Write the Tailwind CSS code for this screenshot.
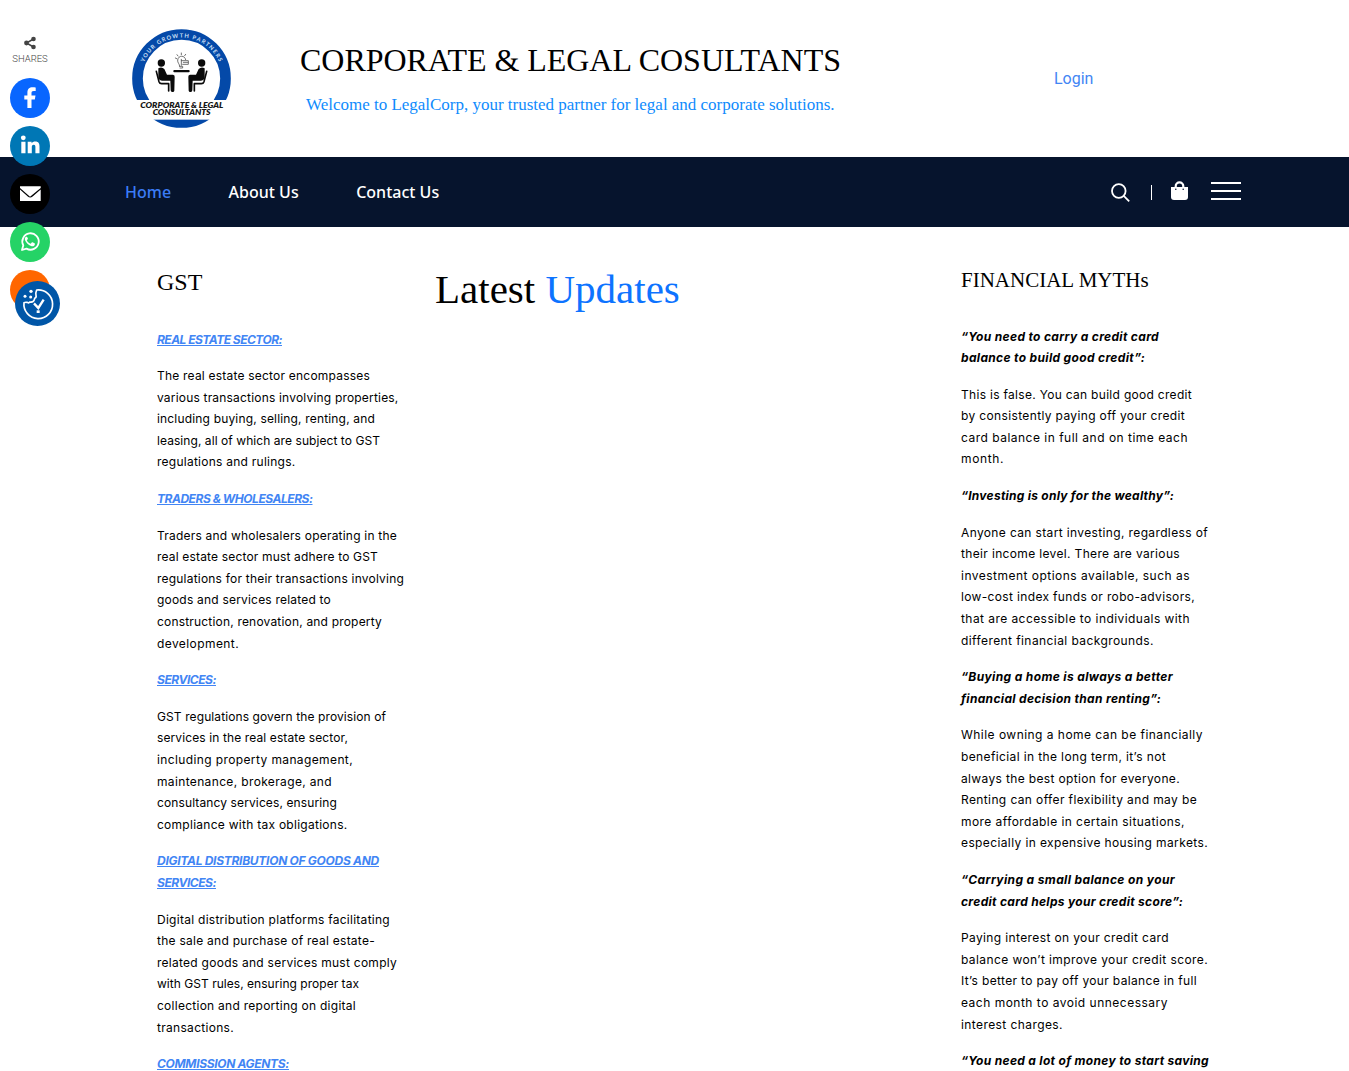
<!DOCTYPE html>
<html lang="en">
<head>
<meta charset="utf-8">
<title>Corporate &amp; Legal Consultants</title>
<script src="https://cdn.jsdelivr.net/npm/@tailwindcss/browser@4"></script>
</head>
<body class="relative h-[1071px] overflow-hidden bg-white text-black">

<!-- Header -->
<header class="flex h-[157px] pl-[132px]">
  <svg class="mt-[29px] h-[99px] w-[99px] shrink-0" viewBox="36 27 297 297">
    <circle cx="184.500" cy="175.500" r="132" fill="none" stroke="#0449a8" stroke-width="32"/>
    <rect x="30" y="240" width="310" height="59" fill="#fff"/>
    <defs><path id="arc" d="M72 127 A123 123 0 0 1 301 135"/></defs>
    <text font-family="Lato, sans-serif" font-size="17" font-weight="700" fill="#cfe0f7"><textPath href="#arc" textLength="284">YOUR GROWTH PARTNERS</textPath></text>
    <g fill="#0a0a0a">
      <circle cx="124" cy="129" r="11"/><circle cx="245" cy="129" r="11"/>
      <rect x="160" y="150" width="49" height="7" rx="3"/>
      <path d="M115 145q10-6 18 2l8 17h18q6 1 5 7l-1 41q-1 5-6 4-5 0-5-5l-1-29h-25q-8 0-11-8z"/>
      <path d="M254 145q-10-6-18 2l-8 17h-18q-6 1-5 7l1 41q1 5 6 4 5 0 5-5l1-29h25q8 0 11-8z"/>
    </g>
    <g fill="none" stroke="#0a0a0a" stroke-width="5" stroke-linecap="round" stroke-linejoin="round">
      <path d="M109 154l8 31q2 6 8 6h21v22"/><path d="M260 154l-8 31q-2 6-8 6h-21v22"/>
    </g>
    <g fill="none" stroke="#555" stroke-width="2.500" stroke-linecap="round">
      <path d="M179 139c0-8-7-10-6-19 2-15 22-15 24-1M179 139h9v5h-8M184 118v18M184 122h21v11h-17M190 127h14M166 114l4 2M171 104l3 4M184 99v5M197 103l-3 4"/>
    </g>
    <g font-family="Lato, sans-serif" font-size="21" font-weight="800" font-style="italic" fill="#161616">
      <text x="61" y="264" textLength="249" lengthAdjust="spacingAndGlyphs">CORPORATE &amp; LEGAL</text>
      <text x="98" y="284" textLength="174" lengthAdjust="spacingAndGlyphs">CONSULTANTS</text>
    </g>
  </svg>
  <div class="ml-[69px] w-[542px] whitespace-nowrap font-['Liberation_Serif',serif]">
    <h1 class="mt-[41px] text-[32px] leading-[38px] tracking-[-0.03px]">CORPORATE &amp; LEGAL COSULTANTS</h1>
    <p class="mt-[16px] pl-[6px] text-[17px] leading-[20px] tracking-[-0.01px] text-[#0f8bfd]">Welcome to LegalCorp, your trusted partner for legal and corporate solutions.</p>
  </div>
  <a class="ml-[212px] mt-[67px] font-[Roboto,sans-serif] text-base leading-6 text-[#4285f4]">Login</a>
</header>

<!-- Navigation -->
<nav class="flex h-[70px] items-center bg-[#06142d] pl-[125px] pr-[108px] font-['Noto_Sans',sans-serif] text-base font-medium text-white">
  <div class="flex gap-[57.5px]">
    <a class="text-[#3b7cf5]">Home</a><a>About Us</a><a>Contact Us</a>
  </div>
  <div class="ml-auto flex items-center">
    <svg class="mt-[2px] h-[20px] w-[20px]" viewBox="0 0 20 20" fill="none" stroke="#fff" stroke-width="1.800"><circle cx="7.800" cy="8" r="6.800"/><path d="M12.500 12.700l5.700 5.700"/></svg>
    <span class="ml-[20px] h-[15px] w-px bg-white"></span>
    <svg class="ml-[19px] mt-[-3px] h-[19px] w-[17px]" viewBox="0 0 17 19"><path d="M4.700 7V5.200a3.800 3.800 0 0 1 7.600 0V7" fill="none" stroke="#fff" stroke-width="2.200"/><path d="M0 6h17v10a3 3 0 0 1-3 3H3a3 3 0 0 1-3-3z" fill="#fff"/><circle cx="4.800" cy="8.300" r=".8" fill="#06142d"/><circle cx="12.200" cy="8.300" r=".8" fill="#06142d"/></svg>
    <span class="ml-[23px] mt-[-2px] flex w-[30px] flex-col gap-[6px]"><i class="h-[2px] bg-white"></i><i class="h-[2px] bg-white"></i><i class="h-[2px] bg-white"></i></span>
  </div>
</nav>

<!-- Three-column content -->
<main class="flex pl-[157px]">
  <section class="w-[278px] shrink-0">
    <h2 class="mt-[41px] font-['Liberation_Serif',serif] text-[24px] leading-[28px]">GST</h2>
    <div class="mt-[32.5px] flex flex-col gap-[15px] whitespace-nowrap font-[Inter,sans-serif] text-[12px] leading-[21.6px] [&_span]:block [&_h3]:font-bold [&_h3]:italic [&_h3]:text-[#4285f4] [&_h3]:underline">
      <h3><span class="tracking-[-0.523px]">REAL ESTATE SECTOR:</span></h3>
      <p>
        <span class="tracking-[0.211px]">The real estate sector encompasses</span>
        <span class="tracking-[0.189px]">various transactions involving properties,</span>
        <span class="tracking-[0.171px]">including buying, selling, renting, and</span>
        <span class="tracking-[0.065px]">leasing, all of which are subject to GST</span>
        <span class="tracking-[0.251px]">regulations and rulings.</span>
      </p>
      <h3><span class="tracking-[-0.473px]">TRADERS &amp; WHOLESALERS:</span></h3>
      <p>
        <span class="tracking-[0.212px]">Traders and wholesalers operating in the</span>
        <span class="tracking-[0.171px]">real estate sector must adhere to GST</span>
        <span class="tracking-[0.208px]">regulations for their transactions involving</span>
        <span class="tracking-[0.204px]">goods and services related to</span>
        <span class="tracking-[0.186px]">construction, renovation, and property</span>
        <span class="tracking-[0.413px]">development.</span>
      </p>
      <h3><span class="tracking-[-0.476px]">SERVICES:</span></h3>
      <p>
        <span class="tracking-[0.097px]">GST regulations govern the provision of</span>
        <span class="tracking-[0.111px]">services in the real estate sector,</span>
        <span class="tracking-[0.382px]">including property management,</span>
        <span class="tracking-[0.354px]">maintenance, brokerage, and</span>
        <span class="tracking-[0.117px]">consultancy services, ensuring</span>
        <span class="tracking-[0.268px]">compliance with tax obligations.</span>
      </p>
      <h3><span class="tracking-[-0.279px]">DIGITAL DISTRIBUTION OF GOODS AND</span><span class="tracking-[-0.476px]">SERVICES:</span></h3>
      <p>
        <span class="tracking-[0.272px]">Digital distribution platforms facilitating</span>
        <span class="tracking-[0.262px]">the sale and purchase of real estate-</span>
        <span class="tracking-[0.264px]">related goods and services must comply</span>
        <span class="tracking-[0.031px]">with GST rules, ensuring proper tax</span>
        <span class="tracking-[0.263px]">collection and reporting on digital</span>
        <span class="tracking-[0.299px]">transactions.</span>
      </p>
      <h3><span class="tracking-[-0.334px]">COMMISSION AGENTS:</span></h3>
    </div>
  </section>

  <section class="w-[526px] shrink-0">
    <h2 class="mt-[38px] font-['Liberation_Serif',serif] text-[41px] leading-[48px]">Latest <span class="text-[#0d73ff]">Updates</span></h2>
  </section>

  <section class="w-[260px] shrink-0">
    <h2 class="mt-[41px] whitespace-nowrap font-['Liberation_Serif',serif] text-[21px] leading-[25px]">FINANCIAL MYTHs</h2>
    <div class="mt-[32.5px] flex flex-col gap-[15px] whitespace-nowrap font-[Inter,sans-serif] text-[12px] leading-[21.6px] [&_span]:block [&_h3]:font-bold [&_h3]:italic">
      <h3><span class="tracking-[0.331px]">“You need to carry a credit card</span><span class="tracking-[0.338px]">balance to build good credit”:</span></h3>
      <p>
        <span class="tracking-[0.3px]">This is false. You can build good credit</span>
        <span class="tracking-[0.358px]">by consistently paying off your credit</span>
        <span class="tracking-[0.493px]">card balance in full and on time each</span>
        <span class="tracking-[0.62px]">month.</span>
      </p>
      <h3><span class="tracking-[0.254px]">“Investing is only for the wealthy”:</span></h3>
      <p>
        <span class="tracking-[0.365px]">Anyone can start investing, regardless of</span>
        <span class="tracking-[0.344px]">their income level. There are various</span>
        <span class="tracking-[0.478px]">investment options available, such as</span>
        <span class="tracking-[0.345px]">low-cost index funds or robo-advisors,</span>
        <span class="tracking-[0.437px]">that are accessible to individuals with</span>
        <span class="tracking-[0.417px]">different financial backgrounds.</span>
      </p>
      <h3><span class="tracking-[0.364px]">“Buying a home is always a better</span><span class="tracking-[0.326px]">financial decision than renting”:</span></h3>
      <p>
        <span class="tracking-[0.466px]">While owning a home can be financially</span>
        <span class="tracking-[0.377px]">beneficial in the long term, it’s not</span>
        <span class="tracking-[0.353px]">always the best option for everyone.</span>
        <span class="tracking-[0.386px]">Renting can offer flexibility and may be</span>
        <span class="tracking-[0.438px]">more affordable in certain situations,</span>
        <span class="tracking-[0.383px]">especially in expensive housing markets.</span>
      </p>
      <h3><span class="tracking-[0.374px]">“Carrying a small balance on your</span><span class="tracking-[0.311px]">credit card helps your credit score”:</span></h3>
      <p>
        <span class="tracking-[0.374px]">Paying interest on your credit card</span>
        <span class="tracking-[0.402px]">balance won’t improve your credit score.</span>
        <span class="tracking-[0.348px]">It’s better to pay off your balance in full</span>
        <span class="tracking-[0.496px]">each month to avoid unnecessary</span>
        <span class="tracking-[0.417px]">interest charges.</span>
      </p>
      <h3><span class="tracking-[0.318px]">“You need a lot of money to start saving</span></h3>
    </div>
  </section>
</main>

<!-- Floating share bar -->
<aside class="absolute left-0 top-[36px] flex w-[60px] flex-col items-center">
  <svg class="h-[14px] w-[12px]" viewBox="0 0 12 14" fill="#444"><circle cx="2.500" cy="7" r="2.400"/><circle cx="9.500" cy="3" r="2.300"/><circle cx="9.500" cy="11" r="2.300"/><path d="M9.500 3l-7 4 7 4" fill="none" stroke="#444" stroke-width="1.500"/></svg>
  <span class="mt-[2px] font-[Roboto,sans-serif] text-[9.500px] font-light leading-[13px] text-[#444]">SHARES</span>
  <div class="mt-[13px] flex flex-col gap-2 [&>svg]:size-10">
    <svg viewBox="0 0 40 40"><circle cx="20" cy="20" r="20" fill="#0866ff"/><path d="M17.400 30V21.500H14.300V17.400h3.100v-2.600c0-3.800 2-5.500 5.200-5.500 1.300 0 2.500.1 3.100.3v3.500h-2c-1.700 0-2.200.8-2.200 2.200v2.100h4l-.7 4.100h-3.300V30z" fill="#fff"/></svg>
    <svg viewBox="0 0 40 40"><circle cx="20" cy="20" r="20" fill="#0077b5"/><circle cx="13.300" cy="11.800" r="2.400" fill="#fff"/><path d="M11.300 15.700h4.200v11.500h-4.200zM17.700 15.700h3.900v1.600c.8-1.300 2-1.900 3.700-1.900 3.400 0 4.200 2.200 4.200 5.200v6.600h-4.100v-6c0-1.500-.2-2.500-1.600-2.500-1.700 0-2 1.200-2 2.600v5.900h-4.100z" fill="#fff"/></svg>
    <svg viewBox="0 0 40 40"><circle cx="20" cy="20" r="20" fill="#000"/><path d="M20 22.800L10 13.900V12.200h20.700v1.700z" fill="#fff"/><path d="M10 15.400l7.800 7q2.400 2 4.800 0l8.100-7V27H10z" fill="#fff"/></svg>
    <svg viewBox="0 0 40 40"><circle cx="20" cy="20" r="20" fill="#25d366"/><path d="M12 28l1.300-4.700a8.200 8.200 0 1 1 3.200 3.300z" fill="none" stroke="#fff" stroke-width="1.800" stroke-linejoin="round"/><path d="M17.300 15.300c-.3-.6-.7-.6-1.200-.5-1 .5-1.600 1.700-1.200 3 .9 2.800 3.800 5.700 6.800 6.400 1.600.3 3.200-.5 3.200-2.300 0-.3-.1-.4-.4-.6l-2-1c-.4-.2-.6 0-.8.3l-.7.9c-.3.300-.5.300-.9.100-1.500-.7-2.500-1.700-3.200-3-.1-.3 0-.5.200-.7l.7-1q.2-.3 0-.6z" fill="#fff"/></svg>
    <svg viewBox="0 0 40 40"><circle cx="20" cy="20" r="20" fill="#ff6600"/></svg>
  </div>
</aside>

<!-- Cookie settings button -->
<svg class="absolute left-[15px] top-[281px] size-[45px]" viewBox="0 0 135 135">
  <circle cx="67.500" cy="67.500" r="67.500" fill="#0056a7"/>
  <g fill="none" stroke="#fff" stroke-width="5" stroke-linejoin="round" stroke-linecap="round">
    <path d="M65 27a43 43 0 1 1-38 38q4-2 9-1l5 2 3-3q12 2 14-7l1-4q6-2 4-9-2-6 2-16z"/>
    <path d="M57 67l13 14 16-25" stroke-width="7" stroke-linecap="butt" stroke-linejoin="miter"/>
  </g>
  <g fill="#fff"><circle cx="48" cy="31" r="5"/><circle cx="30" cy="46" r="4.500"/><circle cx="47" cy="48" r="4.500"/><rect x="65" y="88" width="9" height="8"/></g>
</svg>
</body>
</html>
